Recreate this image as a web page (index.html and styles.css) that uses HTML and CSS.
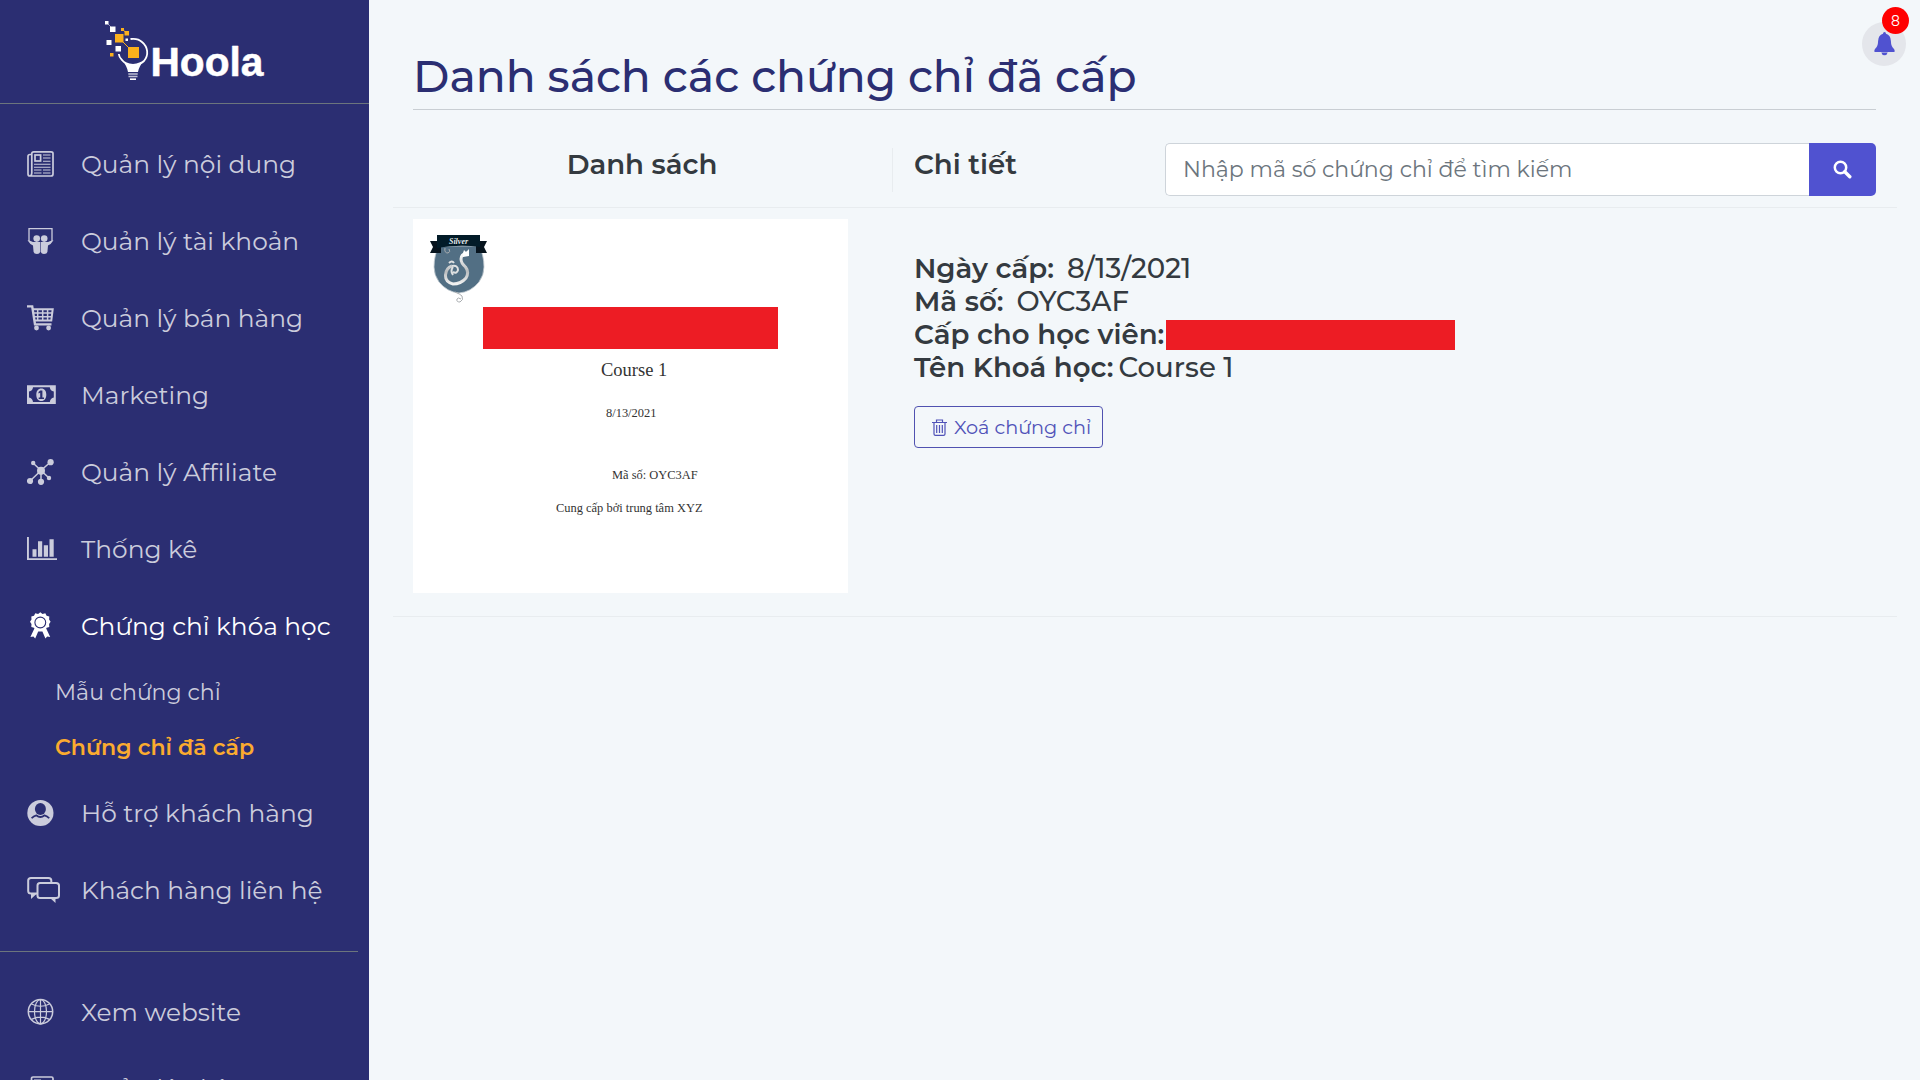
FILE: index.html
```
<!DOCTYPE html>
<html lang="vi">
<head>
<meta charset="utf-8">
<title>Hoola - Chứng chỉ đã cấp</title>
<link rel="stylesheet" href="styles.css">
</head>
<body>
<div class="app">
  <aside class="sidebar">
    <a class="brand" href="#">
      <svg width="180" height="70" viewBox="104 20 180 70">
        <g fill="#fff">
          <rect x="105" y="21" width="3.5" height="3.5"/>
          <rect x="110" y="26.5" width="5.5" height="5.5"/>
          <rect x="106.5" y="40" width="5" height="5"/>
          <rect x="115.5" y="46" width="5.5" height="5.5"/>
          <rect x="125.5" y="38.5" width="2.5" height="2.5"/>
        </g>
        <path d="M107 23l5 5" stroke="#fff" stroke-width=".8" opacity=".6"/>
        <path d="M119 38l14 14M123 30l5 4" stroke="#fbb01c" stroke-width="1"/>
        <g fill="#fbb01c">
          <rect x="115" y="34" width="8.5" height="8.5"/>
          <rect x="128" y="47" width="11" height="11"/>
          <rect x="124.500" y="31" width="4.500" height="4.500"/>
          <rect x="121" y="28" width="3" height="3"/>
          <rect x="110" y="53" width="3.500" height="3.500"/>
        </g>
        <path d="M130.500 39Q138 38 142 42C148 47 149 55 144 61Q141 64 133 65Q125 64 122 60Q119 57 118.800 54" fill="none" stroke="#fff" stroke-width="1.800"/>
        <path d="M122 60Q127 65 133 65Q140 65 144 61Q139 66 138 72h-10Q127 66 122 60z" fill="#fff"/>
        <path d="M128.300 74h9.400M128.500 76.500h9" stroke="#fff" stroke-width="1.500" opacity=".7"/>
        <path d="M130 79.200h6" stroke="#fff" stroke-width="1.600"/>
        <text class="brand-name" x="150.500" y="76" textLength="113" lengthAdjust="spacingAndGlyphs">Hoola</text>
      </svg>
    </a>
    <nav class="menu">
      <a class="item" href="#">
        <svg class="icon" viewBox="0 0 34 28"><g fill="none" stroke="currentColor"><path d="M4.800 4.500H3Q1 4.500 1 6.500V24Q1 26 3 26H24Q26 26 26 24V3.500Q26 1.800 24 1.800H6.800Q4.800 1.800 4.800 3.500V23Q4.800 25 3.500 26" stroke-width="1.700"/><rect x="8" y="5" width="5.600" height="6" stroke-width="1.700"/><path d="M16 5h7.500M16 8h7.500M16 11.300h7.500M7 14.300h16.500M7 17.300h16.500M7 20h7.500M16 20h7.500M7 23h7.500M16 23h7.500" stroke-width="1.100"/></g></svg>
        <span>Quản lý nội dung</span></a>
      <a class="item" href="#">
        <svg class="icon" viewBox="0 0 34 28"><path d="M2 14V1.700H25V14" fill="none" stroke="currentColor" stroke-width="1.300"/><g fill="currentColor"><circle cx="9.700" cy="11.600" r="3.300"/><circle cx="17.200" cy="11.600" r="3.300"/><path d="M.5 13.300L3 13.800 6 15H13.200V25Q12.500 27 10 27Q7 27 6.600 25Q6.300 22 6 18.500Q3 17.500 .5 13.300zM26.500 13.300L24 13.800 21 15H13.800V25Q14.500 27 17 27Q20 27 20.400 25Q20.700 22 21 18.500Q24 17.500 26.500 13.300z"/></g></svg>
        <span>Quản lý tài khoản</span></a>
      <a class="item" href="#">
        <svg class="icon" viewBox="0 0 34 28"><g fill="none" stroke="currentColor"><path d="M0 2.400h5.200l2.800 18h16.500" stroke-width="2.400"/><path d="M5.800 5.200H25.700L24.300 16.500H7.500" stroke-width="2"/><path d="M6.200 9h19M7 12.700h18M10.700 5v11.500M15.700 5v11.500M20.600 5v11.500" stroke-width="1.500"/></g><circle cx="9.500" cy="24" r="2.400" fill="currentColor"/><circle cx="21.600" cy="24" r="2.400" fill="currentColor"/></svg>
        <span>Quản lý bán hàng</span></a>
      <a class="item" href="#">
        <svg class="icon" viewBox="0 0 34 28"><path fill="currentColor" fill-rule="evenodd" d="M0 4.200H28.800V23H0zM6 6.200Q5.500 10 2 10.500V16.500Q5.500 17 6 21H22.800Q23.300 17 26.800 16.500V10.500Q23.300 10 22.800 6.200zM14.300 7.600C17.500 7.600 19.300 10 19.300 13.700S17.500 20 14.300 20 9.300 17.500 9.300 13.700 11.200 7.600 14.300 7.600zM13.200 9.600L11.500 11V12.500L13.200 11.800V16.500H11.700V18H17V16.500H15.400V9.600z"/></svg>
        <span>Marketing</span></a>
      <a class="item" href="#">
        <svg class="icon" viewBox="0 0 34 28"><path d="M14 12.500L23.500 4M14 12.500L6 5M14 12.500L3 23M14 12.500V23.500M14 12.500L22 20" stroke="currentColor" stroke-width="1.500"/><g fill="currentColor"><circle cx="14" cy="12.700" r="4"/><circle cx="23.600" cy="4.200" r="3.100"/><circle cx="6.200" cy="5" r="2.200"/><circle cx="3" cy="23" r="3.100"/><circle cx="14" cy="23.800" r="3.100"/><circle cx="22" cy="20" r="2.200"/></g></svg>
        <span>Quản lý Affiliate</span></a>
      <a class="item" href="#">
        <svg class="icon" viewBox="0 0 34 28"><path fill="currentColor" d="M0 2h1.900v21.200H30V25H0zM5.500 14.300h4v7.500h-4zM11 6.300h4.200v15.500H11zM16.800 10.300h4.200v11.500h-4.200zM22.500 4.300h4.200v17.500h-4.200z"/></svg>
        <span>Thống kê</span></a>
      <a class="item active" href="#">
        <svg class="icon" viewBox="0 0 34 28"><path fill="currentColor" d="M13.300 .2l2.200 1.700 2.800-.6 1.300 2.400 2.700.8-.2 2.900 1.500 2.300-1.500 2.400.2 2.800-2.700.9-.4.800L23.200 25l-3-.4-1.800 2-3-7.100h-4.200l-3 7.100-1.800-2-3 .4 4-8.400-.4-.8-2.700-.9.2-2.800-1.500-2.400 1.500-2.300-.2-2.900 2.700-.8 1.300-2.400 2.800.6z"/><circle cx="13.300" cy="10.500" r="5.400" fill="none" stroke="#2b2e72" stroke-width="1.100"/></svg>
        <span>Chứng chỉ khóa học</span></a>
      <a class="subitem" href="#">Mẫu chứng chỉ</a>
      <a class="subitem current" href="#">Chứng chỉ đã cấp</a>
      <a class="item" href="#">
        <svg class="icon" viewBox="0 0 34 28"><circle cx="13.400" cy="14" r="13.100" fill="currentColor"/><ellipse cx="13.400" cy="10" rx="5.500" ry="6" fill="#2b2e72"/><path d="M4.600 19.300Q6.500 17 9.300 16.300Q13.400 19.800 17.500 16.300Q20.300 17 22.200 19.300" fill="none" stroke="#2b2e72" stroke-width="1.800" stroke-linejoin="round"/></svg>
        <span>Hỗ trợ khách hàng</span></a>
      <a class="item" href="#">
        <svg class="icon" viewBox="0 0 34 28"><g fill="none" stroke="currentColor" stroke-width="2" stroke-linejoin="round"><path d="M10 17.500H4Q1.200 17.500 1.200 15V4.500Q1.200 2 4 2H21.500Q24.300 2 24.300 4.500V6.500"/><path d="M13 7H29Q32 7 32 9.500V19.500Q32 22 29 22H13Q10.500 22 10.500 19.500V9.500Q10.500 7 13 7z"/></g><path fill="currentColor" d="M4 17h6.500L4 23zM23 22h5.500v5z"/></svg>
        <span>Khách hàng liên hệ</span></a>
      <hr class="divider">
      <a class="item" href="#">
        <svg class="icon" viewBox="0 0 34 28"><g fill="none" stroke="currentColor" stroke-width="1.200"><circle cx="13.500" cy="13.700" r="12.200" stroke-width="1.500"/><ellipse cx="13.500" cy="13.700" rx="6" ry="12.200"/><path d="M13.500 1.500v24.400M1.300 13.700h24.400M4.500 6Q13.500 10.500 22.500 6M4.500 21.400Q13.500 16.900 22.500 21.400"/></g></svg>
        <span>Xem website</span></a>
      <a class="item last" href="#">
        <svg class="icon" viewBox="0 0 34 28"><rect x="4.500" y="2" width="21.500" height="24" rx="1.500" fill="none" stroke="currentColor" stroke-width="1.700"/><path d="M7 5.200h7" stroke="currentColor" stroke-width="1.500"/></svg>
        <span>Quản lý phòng</span></a>
    </nav>
  </aside>

  <main class="content">
    <button class="notify" aria-label="Thông báo">
      <svg width="21" height="24" viewBox="0 0 21 24"><path fill="#5052d0" d="M10.500 0Q12 0 12 1.700Q16.700 3 16.900 9Q17 14.500 20 17Q21 18 20.500 20H.5Q0 18 1 17Q4 14.500 4.100 9Q4.300 3 9 1.700Q9 0 10.500 0zM7.300 20.500H13.700Q13 23.300 10.500 23.300T7.300 20.500z"/></svg>
      <span class="count">8</span>
    </button>
    <h1 class="title">Danh sách các chứng chỉ đã cấp</h1>

    <section class="table">
      <header class="row head">
        <h2 class="col-list">Danh sách</h2>
        <div class="col-detail">
          <h2>Chi tiết</h2>
          <form class="search">
            <input type="text" placeholder="Nhập mã số chứng chỉ để tìm kiếm">
            <button type="button" aria-label="Tìm kiếm">
              <svg width="19" height="19" viewBox="0 0 19 19" fill="none" stroke="#fff"><circle cx="7.500" cy="7.500" r="5.700" stroke-width="2.500"/><path d="M11.800 11.800l5 5" stroke-width="3.400" stroke-linecap="round"/></svg>
            </button>
          </form>
        </div>
      </header>

      <article class="row entry">
        <div class="certificate">
          <svg class="badge" width="60" height="70" viewBox="0 0 60 70">
            <defs><linearGradient id="silver" x1="0" y1="0" x2="0" y2="1"><stop offset="0" stop-color="#fff"/><stop offset=".6" stop-color="#b9bcbe"/><stop offset="1" stop-color="#f2f2f2"/></linearGradient></defs>
            <path d="M10 13H50Q55 22 55 34Q55 42 50 49Q42 59 30 60Q18 59 10 49Q5 42 5 34Q5 22 10 13z" fill="#526f84" stroke="#c3ccd2" stroke-width=".8"/>
            <path d="M1 8H12V20H1L4 14zM58 8H47V20H58L55 14z" fill="#06131d"/>
            <path d="M8 2H51V14Q30 11 8 15z" fill="#021b28"/>
            <text x="29.500" y="11" class="badge-ribbon">Silver</text>
            <path d="M39 20Q32 21 32 26Q32 30 36.500 34Q40.500 39 37 45Q32 51 24 51Q16 49 16.500 42Q17 35 23 33" fill="none" stroke="url(#silver)" stroke-width="3"/>
            <path d="M23 33Q29 32 29 37Q28 41 24 39M20 30q3-3 5 0M24 34q-3 4 0 8" fill="none" stroke="#dfe1e2" stroke-width="2"/>
            <path d="M34 20l1-3 2 2 3-3v7l-6 1z" fill="#fff"/>
            <path d="M16 15Q15 20 19 20Q22 19 20 16M26 59Q31 61 33 63Q35 67 31 69Q27 69 28 66Q29 64 32 66" fill="none" stroke="#a9adb0" stroke-width="1"/>
          </svg>
          <div class="redacted"></div>
          <p class="cert-course">Course 1</p>
          <p class="cert-date">8/13/2021</p>
          <p class="cert-code">Mã số: OYC3AF</p>
          <p class="cert-issuer">Cung cấp bởi trung tâm XYZ</p>
        </div>
        <div class="details">
          <p><b>Ngày cấp:</b><span class="spaced">8/13/2021</span></p>
          <p><b>Mã số:</b><span class="spaced">OYC3AF</span></p>
          <p><b>Cấp cho học viên:</b><span class="redacted-name"></span></p>
          <p><b>Tên Khoá học:</b><span class="near">Course 1</span></p>
          <button class="delete" type="button">
            <svg width="15" height="17" viewBox="0 0 15 17" fill="none" stroke="currentColor"><path d="M0 3.500h15M4.500 3.300V1h6v2.300M2 3.500V15Q2 16.300 3.500 16.300H11.500Q13 16.300 13 15V3.500" stroke-width="1.200"/><path d="M4.700 6v8M7.500 6v8M10.300 6v8" stroke-width="1.200"/></svg>
            Xoá chứng chỉ
          </button>
        </div>
      </article>
    </section>
  </main>
</div>
</body>
</html>
```
FILE: styles.css
```
* { box-sizing: border-box; }
body {
  margin: 0;
  font-family: Montserrat, Inter, sans-serif;
  color: #343a40;
  background: #f3f7fa;
}
h1, h2, p { margin: 0; }
a { color: inherit; text-decoration: none; }
button { font: inherit; }
.app { display: flex; height: 1080px; overflow: hidden; }

.sidebar { flex: none; width: 369px; background: #2b2e72; color: #cbccdc; overflow: hidden; }
.brand { display: flex; height: 104px; padding: 20px 0 0 104px; border-bottom: 1px solid #6c757d; }
.brand svg { flex: none; }
.brand-name {
  font: bold 41px "Liberation Sans", Arial, sans-serif;
  fill: #fff; stroke: #fff; stroke-width: .5px; stroke-linejoin: round;
}
.menu { padding-top: 21.5px; }
.item { display: flex; align-items: center; height: 77px; padding-left: 27px; font-size: 24.85px; white-space: nowrap; }
.item span { line-height: 30px; }
.item.last span { padding-bottom: 2px; }
.icon { flex: none; width: 34px; height: 28px; margin-right: 20px; }
.item.active { color: #fff; }
.subitem { display: flex; align-items: center; height: 55px; padding-left: 55px; font-size: 22.1px; }
.subitem.current { color: #fbab2f; font-weight: 600; }
.divider { width: 358px; height: 1px; margin: 22px 0; border: 0; background: #6c757d; }

.content { position: relative; flex: 1; padding: 44px 44px 0; }
.title {
  height: 66px;
  border-bottom: 1px solid #c9ced3;
  color: #2b2e72;
  font-size: 44.05px; font-weight: 500; line-height: 64px;
  white-space: nowrap;
}
.notify {
  position: absolute; top: 22px; right: 14px;
  display: flex; align-items: center; justify-content: center;
  width: 44px; height: 44px; padding: 0;
  border: 0; border-radius: 50%; background: #e4e6eb;
}
.count {
  position: absolute; top: -15px; right: -3px;
  width: 27px; height: 27px;
  border-radius: 50%; background: #f00; color: #fff;
  font-size: 14px; line-height: 28px; text-align: center;
}

.table { margin: 0 -21px 0 -20px; }
.row { display: flex; border-bottom: 1px solid #e8ecef; }
.head { height: 98px; padding-top: 33px; }
.head h2 { margin-top: 5px; height: 44px; font-size: 27.6px; font-weight: 600; line-height: 32px; }
.head .col-list { width: 500px; padding-right: 1px; border-right: 1px solid #e8ecef; text-align: center; }
.col-detail {
  display: flex; flex: 1; justify-content: space-between;
  padding: 0 21px;
}
.search { display: flex; width: 711px; height: 53px; }
.search input {
  flex: 1; min-width: 0; padding: 0 17px;
  border: 1px solid #ced4da; border-right: 0; border-radius: 5px 0 0 5px;
  background: #fff; font: 22.05px Montserrat, Inter, sans-serif;
}
.search input::placeholder { color: #6c757d; opacity: 1; }
.search button {
  display: flex; align-items: center; justify-content: center;
  width: 67px; border: 0; border-radius: 0 5px 5px 0; background: #5052d0;
}

.entry { height: 409px; padding: 11px 20px 0; }
.certificate {
  width: 435px; height: 374px; padding: 14px 0 0;
  background: #fff; color: #333;
  font-family: "Liberation Serif", "Times New Roman", serif;
  font-size: 12.45px; line-height: 16px; white-space: nowrap;
}
.badge { display: block; margin-left: 16px; }
.badge-ribbon { font: italic bold 8px "Liberation Serif", serif; fill: #e6eaec; text-anchor: middle; }
.redacted { width: 295px; height: 42px; margin: 4px 0 0 70px; background: #ed1c24; }
.cert-course { margin: 9px 0 0 188px; font-size: 18.5px; line-height: 24px; }
.cert-date { margin: 23px 0 0 193px; }
.cert-code { margin: 46px 0 0 199px; }
.cert-issuer { margin: 17px 0 0 143px; }

.details { padding: 33px 0 0 66px; font-size: 27.6px; }
.details p { display: flex; align-items: center; height: 33px; line-height: 33px; white-space: nowrap; }
.details b { font-weight: 600; }
.details span { font-weight: 500; }
.spaced { margin-left: 13px; }
.near { margin-left: 5px; }
.redacted-name { width: 289px; height: 30px; margin-left: 2px; background: #ed1c24; }
.delete {
  display: flex; align-items: center; gap: 7px;
  width: 189px; height: 42px; margin-top: 22px; padding: 0 0 0 17px;
  border: 1px solid #5052b0; border-radius: 4px; background: none;
  color: #5052b8; font-size: 19.3px; white-space: nowrap;
}
```
